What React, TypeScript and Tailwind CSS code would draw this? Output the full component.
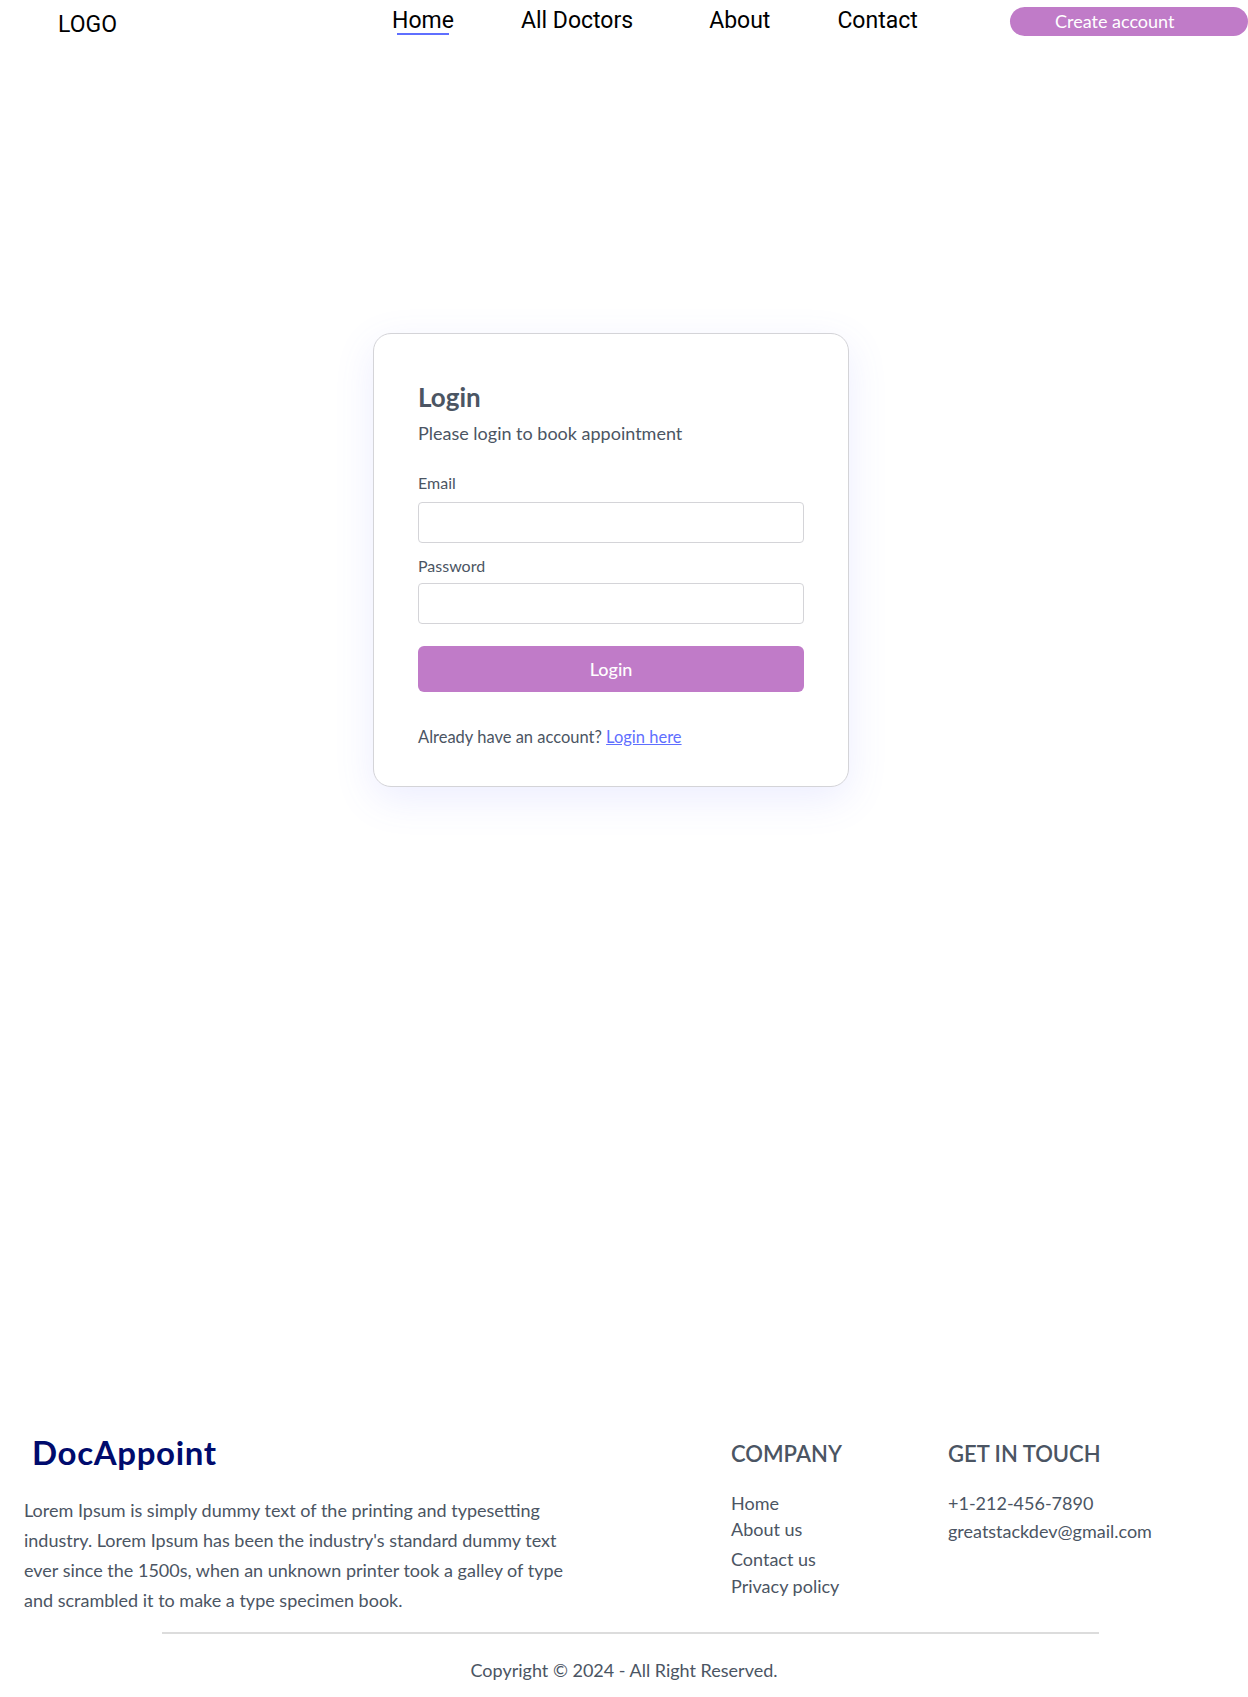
const navLinks = [
  { label: 'Home', active: true, gap: 'ml-[275px]' },
  { label: 'All Doctors', active: false, gap: 'ml-[67px]' },
  { label: 'About', active: false, gap: 'ml-[76px]' },
  { label: 'Contact', active: false, gap: 'ml-[67px]' },
]

const Navbar = () => (
  <header className="flex h-[45px] items-start pl-[58px] font-['Roboto',sans-serif] text-black">
    <div className="mt-[11px] text-[23px] leading-[28px]">LOGO</div>
    <nav className="flex items-start">
      {navLinks.map((link) => (
        <a key={link.label} href="#" className={`${link.gap} mt-[8px] flex flex-col items-center`}>
          <span className="text-[23px] leading-[25px]">{link.label}</span>
          {link.active && <span className="h-[2px] w-[84%] bg-[#5f6fff]" />}
        </a>
      ))}
    </nav>
    <button className="ml-auto mt-[7px] flex h-[29px] w-[238px] items-center rounded-full bg-[#c07bc8] pl-[45px] font-['Lato',sans-serif] text-[18px] font-normal text-white">
      Create account
    </button>
  </header>
)

const LoginCard = () => (
  <form className="flex w-[476px] flex-col rounded-[18px] border border-[#d4d4d8] bg-white px-[44px] pb-[39px] pt-[47px] font-['Lato',sans-serif] text-[#4b5563] shadow-[0_12px_40px_rgba(95,111,255,0.12)]">
    <h1 className="text-[26px] font-bold leading-[32px]">Login</h1>
    <p className="mt-[8px] text-[18px] leading-[24px]">Please login to book appointment</p>

    <label htmlFor="email" className="mt-[28px] text-[16px] leading-[20px]">
      Email
    </label>
    <input id="email" type="email" className="mt-[9px] h-[41px] w-full rounded-[4px] border border-[#d4d4d8] px-3 outline-none" />

    <label htmlFor="password" className="mt-[13px] text-[16px] leading-[20px]">
      Password
    </label>
    <input id="password" type="password" className="mt-[7px] h-[41px] w-full rounded-[4px] border border-[#d4d4d8] px-3 outline-none" />

    <button type="submit" className="mt-[22px] h-[46px] w-full rounded-[6px] bg-[#c07bc8] text-[18px] font-medium text-white">
      Login
    </button>

    <p className="mt-[35px] text-[16.5px] leading-[20px]">
      Already have an account?{' '}
      <a href="#" className="text-[#5f6fff] underline">
        Login here
      </a>
    </p>
  </form>
)

const Footer = () => (
  <footer className="font-['Lato',sans-serif] text-[#4b5563]">
    <div className="flex pl-[24px]">
      <div className="w-[566px]">
        <div className="ml-[8px] text-[33px] font-bold leading-[38px] tracking-[0.02em] text-[#000b6d]">DocAppoint</div>
        <p className="mt-[24px] text-[18px] leading-[30px]">
          Lorem Ipsum is simply dummy text of the printing and typesetting industry. Lorem Ipsum has been the
          industry's standard dummy text ever since the 1500s, when an unknown printer took a galley of type and
          scrambled it to make a type specimen book.
        </p>
      </div>

      <div className="ml-[141px] w-[217px] pt-[7px]">
        <h3 className="text-[22px] font-semibold leading-[28px] text-[#4b5563]">COMPANY</h3>
        <ul className="mt-[22px] text-[18px] leading-[26px]">
          <li>Home</li>
          <li>About us</li>
          <li className="mt-[4px]">Contact us</li>
          <li className="mt-[1px]">Privacy policy</li>
        </ul>
      </div>

      <div className="pt-[7px]">
        <h3 className="text-[22px] font-semibold leading-[28px] text-[#4b5563]">GET IN TOUCH</h3>
        <ul className="mt-[22px] text-[18px] leading-[26px]">
          <li>+1-212-456-7890</li>
          <li className="mt-[2px]">greatstackdev@gmail.com</li>
        </ul>
      </div>
    </div>

    <hr className="ml-[162px] mt-[17px] w-[937px] border-0 border-t-2 border-[#dcdcdc]" />
    <p className="mt-[24px] pb-[15px] text-center text-[18px] leading-[24px]">Copyright © 2024 - All Right Reserved.</p>
  </footer>
)

export default function App() {
  return (
    <div className="min-h-screen w-full bg-white">
      <Navbar />
      <main className="flex justify-center pb-[646px] pr-[26px] pt-[288px]">
        <LoginCard />
      </main>
      <Footer />
    </div>
  )
}
